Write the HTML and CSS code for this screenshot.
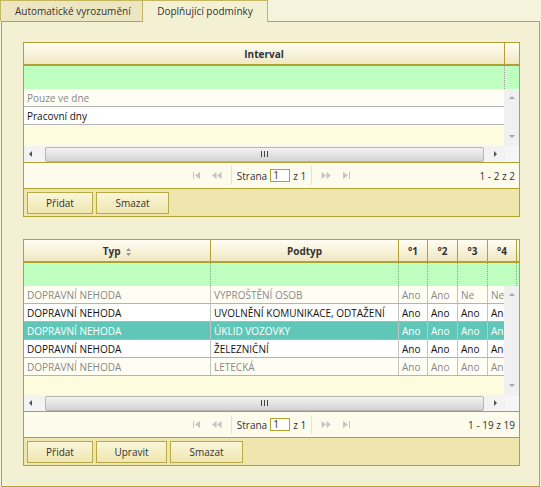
FILE: index.html
```html
<!DOCTYPE html>
<html lang="cs">

<head>
    <meta charset="UTF-8">
    <title>Doplňující podmínky</title>
    <link rel="stylesheet" href="styles.css">
</head>

<body>
    <div class="tabs">
        <div class="tab">Automatické vyrozumění</div>
        <div class="tab active">Doplňující podmínky</div>
    </div>

    <div class="panel">
        <!-- intervaly -->
        <div class="group">
            <div class="row head">
                <div class="hc w-int">Interval</div>
                <div class="hc rest"></div>
            </div>
            <div class="row filter">
                <div class="fc w-int"></div>
            </div>
            <div class="body b1">
                <div class="rows">
                    <div class="r dim"><div class="c w-int">Pouze ve dne</div></div>
                    <div class="r"><div class="c w-int">Pracovní dny</div></div>
                </div>
                <div class="vscroll"><span class="up"></span><span class="down"></span></div>
            </div>
            <div class="hscroll">
                <span class="left"></span>
                <div class="thumb"><svg width="7" height="6" viewBox="0 0 7 6"><rect x="0" y="0" width="1" height="6" /><rect x="3" y="0" width="1" height="6" /><rect x="6" y="0" width="1" height="6" /></svg></div>
                <span class="right"></span>
                <span class="corner"></span>
            </div>
            <div class="pager">
                <div></div>
                <div class="nav">
                    <svg class="ico" width="8" height="7" viewBox="0 0 8 7"><rect x="0" y="0" width="1" height="7" /><path d="M2 3.5 L7 0 V7 Z" /></svg>
                    <svg class="ico" width="10" height="7" viewBox="0 0 10 7"><path d="M0 3.5 L4.5 0 V7 Z M5 3.5 L9.5 0 V7 Z" /></svg>
                    <span class="sep"></span>
                    <span>Strana</span>
                    <span class="page">1</span>
                    <span>z 1</span>
                    <span class="sep"></span>
                    <svg class="ico" width="10" height="7" viewBox="0 0 10 7"><path d="M0.5 0 L5 3.5 L0.5 7 Z M5.5 0 L10 3.5 L5.5 7 Z" /></svg>
                    <svg class="ico" width="8" height="7" viewBox="0 0 8 7"><path d="M1 0 L6 3.5 L1 7 Z" /><rect x="7" y="0" width="1" height="7" /></svg>
                </div>
                <div class="count">1 - 2 z 2</div>
            </div>
            <div class="buttons">
                <div class="btn w66">Přidat</div>
                <div class="btn w73">Smazat</div>
            </div>
        </div>

        <!-- podtypy -->
        <div class="group g2">
            <div class="row head">
                <div class="hc w-typ">Typ <svg class="sort" width="5" height="8" viewBox="0 0 5 8"><path d="M2.5 0 L5 3 H0 Z M0 5 H5 L2.5 8 Z" /></svg></div>
                <div class="hc w-pod">Podtyp</div>
                <div class="hc w-s1">°1</div>
                <div class="hc w-s2">°2</div>
                <div class="hc w-s2">°3</div>
                <div class="hc w-s1">°4</div>
                <div class="hc rest"></div>
            </div>
            <div class="row filter">
                <div class="fc w-typ"></div>
                <div class="fc w-pod"></div>
                <div class="fc w-s1"></div>
                <div class="fc w-s2"></div>
                <div class="fc w-s2"></div>
                <div class="fc w-s1"></div>
            </div>
            <div class="body b2">
                <div class="rows">
                    <div class="r dim">
                        <div class="c w-typ">DOPRAVNÍ NEHODA</div>
                        <div class="c w-pod">VYPROŠTĚNÍ OSOB</div>
                        <div class="c w-s1">Ano</div>
                        <div class="c w-s2">Ano</div>
                        <div class="c w-s2">Ne</div>
                        <div class="c w-s1">Ne</div>
                    </div>
                    <div class="r">
                        <div class="c w-typ">DOPRAVNÍ NEHODA</div>
                        <div class="c w-pod">UVOLNĚNÍ KOMUNIKACE, ODTAŽENÍ</div>
                        <div class="c w-s1">Ano</div>
                        <div class="c w-s2">Ano</div>
                        <div class="c w-s2">Ano</div>
                        <div class="c w-s1">Ano</div>
                    </div>
                    <div class="r sel">
                        <div class="c w-typ">DOPRAVNÍ NEHODA</div>
                        <div class="c w-pod">ÚKLID VOZOVKY</div>
                        <div class="c w-s1">Ano</div>
                        <div class="c w-s2">Ano</div>
                        <div class="c w-s2">Ano</div>
                        <div class="c w-s1">Ano</div>
                    </div>
                    <div class="r">
                        <div class="c w-typ">DOPRAVNÍ NEHODA</div>
                        <div class="c w-pod">ŽELEZNIČNÍ</div>
                        <div class="c w-s1">Ano</div>
                        <div class="c w-s2">Ano</div>
                        <div class="c w-s2">Ano</div>
                        <div class="c w-s1">Ano</div>
                    </div>
                    <div class="r dim">
                        <div class="c w-typ">DOPRAVNÍ NEHODA</div>
                        <div class="c w-pod">LETECKÁ</div>
                        <div class="c w-s1">Ano</div>
                        <div class="c w-s2">Ano</div>
                        <div class="c w-s2">Ano</div>
                        <div class="c w-s1">Ano</div>
                    </div>
                </div>
                <div class="vscroll"><span class="up"></span><span class="down"></span></div>
            </div>
            <div class="hscroll">
                <span class="left"></span>
                <div class="thumb"><svg width="7" height="6" viewBox="0 0 7 6"><rect x="0" y="0" width="1" height="6" /><rect x="3" y="0" width="1" height="6" /><rect x="6" y="0" width="1" height="6" /></svg></div>
                <span class="right"></span>
                <span class="corner"></span>
            </div>
            <div class="pager">
                <div></div>
                <div class="nav">
                    <svg class="ico" width="8" height="7" viewBox="0 0 8 7"><rect x="0" y="0" width="1" height="7" /><path d="M2 3.5 L7 0 V7 Z" /></svg>
                    <svg class="ico" width="10" height="7" viewBox="0 0 10 7"><path d="M0 3.5 L4.5 0 V7 Z M5 3.5 L9.5 0 V7 Z" /></svg>
                    <span class="sep"></span>
                    <span>Strana</span>
                    <span class="page">1</span>
                    <span>z 1</span>
                    <span class="sep"></span>
                    <svg class="ico" width="10" height="7" viewBox="0 0 10 7"><path d="M0.5 0 L5 3.5 L0.5 7 Z M5.5 0 L10 3.5 L5.5 7 Z" /></svg>
                    <svg class="ico" width="8" height="7" viewBox="0 0 8 7"><path d="M1 0 L6 3.5 L1 7 Z" /><rect x="7" y="0" width="1" height="7" /></svg>
                </div>
                <div class="count">1 - 19 z 19</div>
            </div>
            <div class="buttons">
                <div class="btn w66">Přidat</div>
                <div class="btn w71">Upravit</div>
                <div class="btn w73">Smazat</div>
            </div>
        </div>
    </div>
</body>

</html>
```

FILE: styles.css
```css
* {
    box-sizing: border-box;
}

body {
    margin: 0;
    width: 541px;
    height: 487px;
    overflow: hidden;
    background: #f7f4de;
    font-family: "Open Sans", sans-serif;
    font-size: 10px;
    color: #222;
}

/* zalozky */

.tabs {
    display: flex;
    height: 21px;
}

.tab {
    width: 143px;
    height: 21px;
    border: 1px solid #c4b760;
    border-bottom: none;
    background: #ede6c2;
    padding-left: 14px;
    line-height: 21px;
    color: #333;
}

.tab.active {
    width: 125px;
    height: 22px;
    border-left: none;
    background: #f4f0d4;
    padding: 0;
    text-align: center;
    position: relative;
    z-index: 1;
}

/* hlavni panel */

.panel {
    margin-left: 1px;
    width: 539px;
    border: 1px solid #b5a63a;
    background: #f4f0d4;
    padding: 20px 0 20px 21px;
}

.group {
    width: 497px;
    border: 1px solid #b0a232;
}

.group.g2 {
    margin-top: 22px;
}

.row {
    display: flex;
}

.head {
    height: 23px;
    border-bottom: 2px solid #b0a232;
    background: linear-gradient(#fffdf3, #f0e8c2);
}

.hc {
    flex: none;
    height: 21px;
    line-height: 22px;
    text-align: center;
    font-weight: bold;
    color: #333;
    border-right: 1px solid #b0a232;
}

.hc.rest {
    flex: 1;
    border-right: none;
}

.sort {
    fill: #999;
    vertical-align: -1px;
    margin-left: 3px;
}

.filter {
    height: 23px;
    background: #bfffbf;
}

.fc {
    flex: none;
    border-right: 1px dotted #999;
}

.w-int {
    width: 481px;
}

.w-typ {
    width: 187px;
}

.w-pod {
    width: 188px;
}

.w-s1 {
    width: 29px;
}

.w-s2 {
    width: 30px;
}

/* data */

.body {
    display: flex;
    background: #fefcdf;
}

.b1 {
    height: 57px;
}

.b2 {
    height: 109px;
}

.rows {
    width: 480px;
    overflow: hidden;
}

.r {
    display: flex;
    height: 18px;
    border-bottom: 1px solid #b4b4b4;
    background: #fff;
    color: #111;
}

.r.dim {
    background: #fffef4;
    color: #888;
}

.r.sel {
    background: #60c7b8;
    color: #fff;
}

.c {
    flex: none;
    height: 17px;
    line-height: 19px;
    padding-left: 3px;
    white-space: nowrap;
    overflow: hidden;
    border-right: 1px solid #c4c4c4;
}

.b1 .c {
    border-right: none;
}

.vscroll {
    width: 15px;
    background: #f0f0f0;
    display: flex;
    flex-direction: column;
    justify-content: space-between;
    align-items: center;
    padding: 7px 0 8px;
}

.up,
.down {
    width: 0;
    height: 0;
    border-left: 3px solid transparent;
    border-right: 3px solid transparent;
}

.up {
    border-bottom: 3px solid #a8a8a8;
}

.down {
    border-top: 3px solid #a8a8a8;
}

.hscroll {
    display: flex;
    align-items: center;
    height: 16px;
    background: #f3f3f3;
}

.left,
.right {
    width: 0;
    height: 0;
    border-top: 3px solid transparent;
    border-bottom: 3px solid transparent;
}

.left {
    border-right: 3px solid #555;
    margin: 0 13px 0 5px;
}

.right {
    border-left: 3px solid #555;
    margin: 0 9px 0 10px;
}

.thumb {
    width: 439px;
    height: 15px;
    border: 1px solid #b6b6b6;
    border-radius: 2px;
    background: linear-gradient(#f3f3f3, #d3d3d3);
    display: flex;
    align-items: center;
    justify-content: center;
    fill: #444;
}

.corner {
    flex: 1;
    align-self: stretch;
    background: #f6f6f6;
}

/* strankovani */

.pager {
    display: grid;
    grid-template-columns: 1fr auto 1fr;
    align-items: center;
    height: 27px;
    border-top: 1px solid #b0a232;
    border-bottom: 1px solid #b0a232;
    background: #fdfbec;
    color: #333;
}

.nav {
    display: flex;
    align-items: center;
    gap: 3px;
}

.ico {
    fill: #c4c4c4;
    margin: 0 4px;
}

.sep {
    width: 1px;
    height: 19px;
    background: #e8e3cf;
    margin: 0 2px;
}

.page {
    width: 20px;
    height: 13px;
    line-height: 11px;
    border: 1px solid #b0a232;
    background: #fff;
    padding-left: 2px;
}

.count {
    justify-self: end;
    padding-right: 4px;
}

/* tlacitka */

.buttons {
    display: flex;
    gap: 3px;
    height: 27px;
    padding: 3px 0 0 3px;
    background: #efe6ad;
}

.btn {
    height: 22px;
    line-height: 21px;
    text-align: center;
    border: 1px solid #b9aa45;
    background: linear-gradient(#faf6d8, #efe6b0);
    color: #333;
}

.w66 {
    width: 66px;
}

.w71 {
    width: 71px;
}

.w73 {
    width: 73px;
}
```
